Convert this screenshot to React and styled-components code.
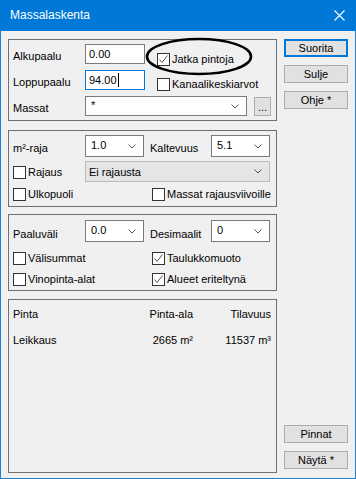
import React from 'react';
import styled, { createGlobalStyle } from 'styled-components';

//#region

const GlobalStyle = createGlobalStyle`
  html, body {
    margin: 0;
    padding: 0;
    background: #f0f0f0;
  }
  * {
    box-sizing: border-box;
  }
`;

const Window = styled.div`
  position: relative;
  display: flex;
  flex-direction: column;
  width: 356px;
  height: 479px;
  border: 1px solid #1883d7;
  border-top: none;
  background: #f0f0f0;
  font-family: "Liberation Sans", Arial, sans-serif;
  font-size: 11px;
  color: #000;
`;

const TitleBar = styled.div`
  display: flex;
  align-items: center;
  justify-content: space-between;
  height: 31px;
  margin: 0 -1px;
  padding: 0 11px 1px 10px;
  background: #0078d7;
  color: #fff;
  font-size: 12px;
`;

const Body = styled.div`
  flex: 1;
  display: flex;
  padding: 8px 6px 5px 7px;
`;

const Main = styled.div`
  display: flex;
  flex-direction: column;
  width: 269px;
`;

const Side = styled.div`
  display: flex;
  flex-direction: column;
  width: 64px;
  margin-left: 7px;
  padding-bottom: 4px;
`;

const Group = styled.div`
  display: flex;
  flex-direction: column;
  height: ${p => p.h ? `${p.h}px` : 'auto'};
  flex: ${p => p.grow ? 1 : 'none'};
  margin-top: ${p => p.top || 0}px;
  padding: ${p => p.pad || 4}px 5px 0 4px;
  border: 1px solid #6f6f6f;
`;

const Row = styled.div`
  display: flex;
  align-items: flex-start;
  height: ${p => p.h}px;
  margin-top: ${p => p.top || 0}px;
`;

const Label = styled.div`
  width: ${p => p.w}px;
  align-self: flex-end;
  margin-left: ${p => p.left || 0}px;
  padding-bottom: ${p => p.bottom ?? 2}px;
  line-height: 14px;
  white-space: nowrap;
`;

const Field = styled.div`
  display: flex;
  align-items: center;
  width: ${p => p.w}px;
  height: ${p => p.h || 20}px;
  padding-left: 3px;
  background: #fff;
  border: 1px solid ${p => p.focus ? '#0078d7' : '#7a7a7a'};
  line-height: 14px;
`;

const Caret = styled.span`
  display: inline-block;
  width: 1px;
  height: 14px;
  margin-left: 1px;
  background: #000;
`;

const Combo = styled.div`
  display: flex;
  align-items: center;
  justify-content: space-between;
  width: ${p => p.w}px;
  height: ${p => p.h || 21}px;
  margin-left: ${p => p.left || 0}px;
  padding: 0 7px 0 ${p => p.disabled ? 3 : 5}px;
  background: ${p => p.disabled ? '#e5e5e5' : '#fff'};
  border: 1px solid ${p => p.disabled ? '#bcbcbc' : '#7a7a7a'};
  line-height: 14px;
  span {
    margin-top: ${p => p.disabled ? 0 : -3}px;
  }
`;

const Check = styled.label`
  display: flex;
  align-items: center;
  width: ${p => p.w ? `${p.w}px` : 'auto'};
  margin-left: ${p => p.left || 0}px;
  margin-top: ${p => p.top || 0}px;
  line-height: 14px;
  white-space: nowrap;
`;

const Box = styled.span`
  display: flex;
  align-items: center;
  justify-content: center;
  width: 13px;
  height: 13px;
  margin-right: 2px;
  background: #fff;
  border: 1px solid #333;
`;

const SmallButton = styled.div`
  display: flex;
  align-items: flex-end;
  justify-content: center;
  width: 17px;
  height: 19px;
  margin: 1px 0 0 7px;
  padding-bottom: 3px;
  background: #e1e1e1;
  border: 1px solid #adadad;
  line-height: 10px;
`;

const Button = styled.div`
  display: flex;
  align-items: center;
  justify-content: center;
  height: 18px;
  margin-top: ${p => p.top || 0}px;
  background: #e1e1e1;
  border: ${p => p.primary ? '2px solid #0078d7' : '1px solid #adadad'};
  line-height: 14px;
`;

const BottomButtons = styled.div`
  margin-top: auto;
`;

const Table = styled.div`
  display: grid;
  grid-template-columns: 1fr 70px 78px;
  row-gap: 12px;
  padding-top: 3px;
  line-height: 14px;
  div:nth-child(3n+2), div:nth-child(3n) {
    text-align: right;
  }
`;

const Ring = styled.svg`
  position: absolute;
  left: 143px;
  top: 36px;
  width: 110px;
  height: 41px;
  pointer-events: none;
`;

//#endregion

const Chevron = () => (
  <svg width="8" height="5" viewBox="0 0 8 5">
    <polyline points="0.5,0.5 4,4 7.5,0.5" fill="none" stroke="#555" strokeWidth="1" />
  </svg>
);

const CheckBox = ({ checked, children, ...rest }) => (
  <Check {...rest}>
    <Box>
      {checked &&
        <svg width="11" height="11" viewBox="0 0 11 11">
          <polyline points="1.5,5.5 4,8.5 9.5,1.5" fill="none" stroke="#555" strokeWidth="1" />
        </svg>
      }
    </Box>
    {children}
  </Check>
);

const App = () => (
  <Window>
    <GlobalStyle />
    <TitleBar>
      <span>Massalaskenta</span>
      <svg width="11" height="11" viewBox="0 0 11 11">
        <path d="M0.5 0.5 L10.5 10.5 M10.5 0.5 L0.5 10.5" stroke="#fff" strokeWidth="1.1" />
      </svg>
    </TitleBar>
    <Body>
      <Main>
        <Group h={82}>
          <Row h={20}>
            <Label w={72} bottom={1}>Alkupaalu</Label>
            <Field w={60}>0.00</Field>
            <CheckBox checked left={12} top={8}>Jatka pintoja</CheckBox>
          </Row>
          <Row h={20} top={6}>
            <Label w={72} bottom={1}>Loppupaalu</Label>
            <Field w={60} focus>94.00<Caret /></Field>
            <CheckBox left={12} top={7}>Kanaalikeskiarvot</CheckBox>
          </Row>
          <Row h={20} top={6}>
            <Label w={72} bottom={1}>Massat</Label>
            <Combo w={162} h={20}><span>*</span><Chevron /></Combo>
            <SmallButton>...</SmallButton>
          </Row>
        </Group>

        <Group h={77} top={9}>
          <Row h={21}>
            <Label w={72} bottom={1}>m²-raja</Label>
            <Combo w={59} h={22}><span>1.0</span><Chevron /></Combo>
            <Label w={61} left={6} bottom={1}>Kaltevuus</Label>
            <Combo w={59} h={22}><span>5.1</span><Chevron /></Combo>
          </Row>
          <Row h={21} top={5}>
            <CheckBox w={72} top={4}>Rajaus</CheckBox>
            <Combo w={185} disabled><span>Ei rajausta</span><Chevron /></Combo>
          </Row>
          <Row h={15} top={5}>
            <CheckBox w={139}>Ulkopuoli</CheckBox>
            <CheckBox>Massat rajausviivoille</CheckBox>
          </Row>
        </Group>

        <Group h={77} top={7} pad={5}>
          <Row h={22}>
            <Label w={72} bottom={1}>Paaluväli</Label>
            <Combo w={59} h={22}><span>0.0</span><Chevron /></Combo>
            <Label w={61} left={6} bottom={1}>Desimaalit</Label>
            <Combo w={59} h={22}><span>0</span><Chevron /></Combo>
          </Row>
          <Row h={14} top={9}>
            <CheckBox w={139}>Välisummat</CheckBox>
            <CheckBox checked>Taulukkomuoto</CheckBox>
          </Row>
          <Row h={14} top={7}>
            <CheckBox w={139}>Vinopinta-alat</CheckBox>
            <CheckBox checked>Alueet eriteltynä</CheckBox>
          </Row>
        </Group>

        <Group grow top={8}>
          <Table>
            <div>Pinta</div>
            <div>Pinta-ala</div>
            <div>Tilavuus</div>
            <div>Leikkaus</div>
            <div>2665 m²</div>
            <div>11537 m³</div>
          </Table>
        </Group>
      </Main>

      <Side>
        <Button primary>Suorita</Button>
        <Button top={8}>Sulje</Button>
        <Button top={8}>Ohje *</Button>
        <BottomButtons>
          <Button>Pinnat</Button>
          <Button top={8}>Näytä *</Button>
        </BottomButtons>
      </Side>
    </Body>
    <Ring viewBox="0 0 110 41">
      <ellipse cx="55" cy="20.5" rx="52" ry="17.5" fill="none" stroke="#000" strokeWidth="2.6" />
    </Ring>
  </Window>
);

export default App;
